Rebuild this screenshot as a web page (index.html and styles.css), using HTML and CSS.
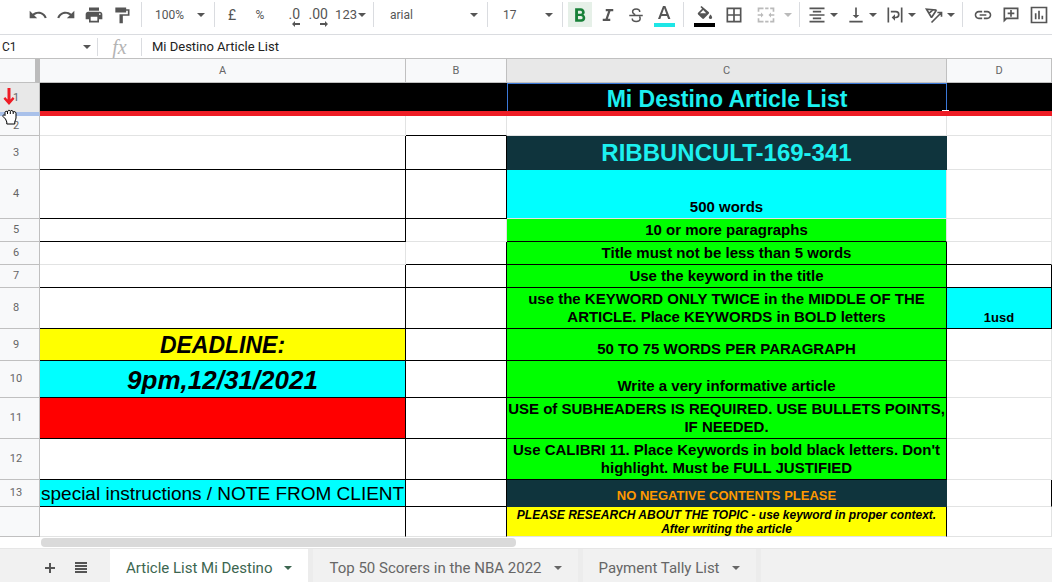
FILE: index.html
```html
<!DOCTYPE html>
<html lang="en">

<head>
    <meta charset="UTF-8">
    <meta name="viewport" content="width=device-width, initial-scale=1.0">
    <title>Mi Destino Article List</title>
    <link rel="stylesheet" href="styles.css">
</head>

<body>
    <!-- toolbar -->
    <div class="toolbar">
        <div class="group first">
            <button type="button" class="tool" aria-label="Undo"><svg width="20" height="20" viewBox="0 0 24 24"><path d="M12.500 8c-2.650 0-5.050.99-6.900 2.600L2 7v9h9l-3.620-3.620c1.390-1.160 3.160-1.880 5.120-1.880 3.540 0 6.550 2.310 7.600 5.500l2.370-.78C21.080 11.030 17.150 8 12.500 8z"/></svg></button>
            <button type="button" class="tool" aria-label="Redo"><svg width="20" height="20" viewBox="0 0 24 24"><path d="M18.400 10.600C16.550 8.990 14.150 8 11.500 8c-4.650 0-8.580 3.030-9.960 7.220L3.900 16c1.050-3.190 4.050-5.500 7.600-5.500 1.950 0 3.730.72 5.120 1.880L13 16h9V7l-3.600 3.600z"/></svg></button>
            <button type="button" class="tool" aria-label="Print"><svg width="20" height="20" viewBox="0 0 24 24"><path d="M19 8H5c-1.660 0-3 1.340-3 3v6h4v4h12v-4h4v-6c0-1.660-1.340-3-3-3zm-3 11H8v-5h8v5zm3-7c-.55 0-1-.45-1-1s.45-1 1-1 1 .45 1 1-.45 1-1 1zm-1-9H6v4h12V3z"/></svg></button>
            <button type="button" class="tool" aria-label="Paint format"><svg width="20" height="20" viewBox="0 0 24 24"><path d="M4 3h13v2h4v8h-8v9H9V11h10V7h-2v2H4z"/></svg></button>
        </div>
        <div class="group">
            <select class="pick zoom" aria-label="Zoom"><option>100%</option></select>
        </div>
        <div class="group">
            <button type="button" class="tool">£</button>
            <button type="button" class="tool small">%</button>
            <button type="button" class="tool decimal">.0<svg width="8" height="6" viewBox="0 0 8 6"><path d="M0 3l3-3v2h5v2H3v2z"/></svg></button>
            <button type="button" class="tool decimal">.00<svg width="8" height="6" viewBox="0 0 8 6"><path d="M8 3L5 0v2H0v2h5v2z"/></svg></button>
            <button type="button" class="tool more format">123<span class="caret"></span></button>
        </div>
        <div class="group">
            <select class="pick font" aria-label="Font"><option>arial</option></select>
        </div>
        <div class="group">
            <select class="pick size" aria-label="Font size"><option>17</option></select>
        </div>
        <div class="group">
            <button type="button" class="tool on" aria-label="Bold"><svg width="18" height="18" viewBox="0 0 24 24"><path d="M16.500 11.600c1.100-.8 1.800-2 1.800-3.300C18.300 5.300 16 3 13 3H5.500v18h8.400c2.900 0 5.100-2.300 5.100-5.100 0-1.900-1-3.500-2.500-4.300zM9.300 6.200h3.400a2 2 0 010 4.100H9.300zm4 11.500h-4v-4.400h4a2.200 2.200 0 010 4.400z"/></svg></button>
            <button type="button" class="tool" aria-label="Italic"><svg width="18" height="18" viewBox="0 0 24 24"><path d="M9 4v3h3.200l-3.500 10H5v3h10v-3h-3.200l3.500-10H19V4z"/></svg></button>
            <button type="button" class="tool" aria-label="Strikethrough"><svg width="18" height="18" viewBox="0 0 24 24" class="line"><path d="M3 12.500h18M17 8c0-2.500-2-4-4.800-4S7.500 5.500 7.500 7.800c0 2 1.500 3 3.500 3.700M7 16.500c0 2.500 2.200 4 5.200 4s5.300-1.500 5.300-4c0-1-.3-1.800-.9-2.500"/></svg></button>
            <button type="button" class="tool swatch" aria-label="Text color"><svg width="20" height="16" viewBox="0 0 20 16"><path d="M9 1h2.400l5 13h-2.300l-1.100-3.100H7.400L6.300 14H4zm-.9 7.900h4.200L10.200 3.200z"/></svg><span class="bar cyan"></span></button>
        </div>
        <div class="group wide">
            <button type="button" class="tool swatch" aria-label="Fill color"><svg width="20" height="16" viewBox="0 0 20 16"><path d="M7.500 1L6.400 2.100l1.700 1.700-4 4c-.5.500-.5 1.200 0 1.600l4.200 4.200c.5.500 1.200.5 1.700 0l4.700-4.800c.5-.5.500-1.200 0-1.700zM9.200 5l3 3.200H6z"/><path d="M16.500 9.500s-1.600 1.800-1.600 2.900a1.600 1.600 0 003.200 0c0-1.100-1.600-2.900-1.600-2.900z"/></svg><span class="bar black"></span></button>
            <button type="button" class="tool" aria-label="Borders"><svg width="20" height="20" viewBox="0 0 24 24"><path d="M3 3v18h18V3zm8 16H5v-6h6zm0-8H5V5h6zm8 8h-6v-6h6zm0-8h-6V5h6z"/></svg></button>
            <button type="button" class="tool more merge" aria-label="Merge cells" disabled><svg width="20" height="20" viewBox="0 0 24 24"><path d="M2 3h7v2H4v3H2zM11 3h4v2h-4zM17 3h5v5h-2V5h-3zM2 16h2v3h5v2H2zM11 19h4v2h-4zM20 16h2v5h-5v-2h3zM2 11h4V9l3 3-3 3v-2H2zM22 11h-4V9l-3 3 3 3v-2h4z"/></svg><span class="caret"></span></button>
        </div>
        <div class="group wide-gap">
            <button type="button" class="tool more" aria-label="Horizontal align"><svg width="20" height="20" viewBox="0 0 24 24"><path d="M3 3h18v2H3zM7 7h10v2H7zM3 11h18v2H3zM7 15h10v2H7zM3 19h18v2H3z"/></svg><span class="caret"></span></button>
            <button type="button" class="tool more" aria-label="Vertical align"><svg width="20" height="20" viewBox="0 0 24 24"><path d="M16 12h-3V3h-2v9H8l4 4zM4 19v2h16v-2z"/></svg><span class="caret"></span></button>
            <button type="button" class="tool more" aria-label="Text wrapping"><svg width="20" height="20" viewBox="0 0 24 24"><path d="M3 3h2v18H3zM19 3h2v18h-2zM7 7h6a4.500 4.500 0 010 9h-1v3l-4-4 4-4v3h1a2.500 2.500 0 000-5H7z"/></svg><span class="caret"></span></button>
            <button type="button" class="tool more" aria-label="Text rotation"><svg width="20" height="20" viewBox="0 0 24 24" class="line"><path d="M9 15L3 5l12 1M6 10l5-4.500M9 15l6-9M9 21L21 9M16 9h5v5"/></svg><span class="caret"></span></button>
        </div>
        <div class="group wide last">
            <button type="button" class="tool" aria-label="Insert link"><svg width="20" height="20" viewBox="0 0 24 24"><path d="M3.900 12c0-1.710 1.390-3.100 3.100-3.100h4V7H7c-2.760 0-5 2.240-5 5s2.240 5 5 5h4v-1.900H7c-1.710 0-3.100-1.390-3.100-3.100zM8 13h8v-2H8v2zm9-6h-4v1.900h4c1.710 0 3.100 1.390 3.100 3.100s-1.390 3.100-3.100 3.100h-4V17h4c2.760 0 5-2.240 5-5s-2.240-5-5-5z"/></svg></button>
            <button type="button" class="tool" aria-label="Insert comment"><svg width="20" height="20" viewBox="0 0 24 24"><path d="M3 3h18v14H7l-4 4V3zm2 2v11l1-1h13V5zm6 1h2v3h3v2h-3v3h-2v-3H8V9h3z"/></svg></button>
            <button type="button" class="tool" aria-label="Insert chart"><svg width="20" height="20" viewBox="0 0 24 24"><path d="M2 2v20h20V2zm18 18H4V4h16zM7 10h2v7H7zM11 7h2v10h-2zM15 13h2v4h-2z"/></svg></button>
        </div>
    </div>

    <!-- name box and formula -->
    <div class="formula-bar">
        <input class="name-box" type="text" value="C1" aria-label="Name box">
        <label class="fx" for="formula">fx</label>
        <input class="formula" id="formula" type="text" value="Mi Destino Article List">
    </div>

    <!-- the sheet -->
    <div class="sheet">
        <table class="grid">
            <colgroup>
                <col class="col-num">
                <col class="col-a">
                <col class="col-b">
                <col class="col-c">
                <col>
            </colgroup>
            <thead>
                <tr>
                    <th class="corner"></th>
                    <th>A</th>
                    <th>B</th>
                    <th class="current">C</th>
                    <th>D</th>
                </tr>
            </thead>
            <tbody>
                <tr class="frozen">
                    <th class="current">1
                        <svg class="arrow" width="12" height="18" viewBox="0 0 12 18"><path d="M4.500 0h3v11.500L9.800 9l1.700 1.700L6 17 .5 10.700 2.200 9l2.300 2.500z"/></svg>
                        <svg class="hand" width="16" height="16" viewBox="0 0 16 16"><path d="M3.500 10L1 7.500c-.5-1 .5-2 1.500-1.500l.5.500V3.500c0-1.500 2-1.500 2.500-.5C5.500 1 8 .8 8.300 2.300 9 1 11 1.300 11.200 3c1-.8 2.800-.2 2.800 1.300V9c0 1.500-.8 2.200-1.200 3.500V15h-8v-2zM5.500 3v2M8.300 2.500V5M11.200 3v2"/></svg>
                    </th>
                    <td></td>
                    <td></td>
                    <td class="selected title">Mi Destino Article List</td>
                    <td></td>
                </tr>
                <tr class="h20">
                    <th>2</th>
                    <td></td>
                    <td class="bb"></td>
                    <td></td>
                    <td></td>
                </tr>
                <tr class="h34">
                    <th>3</th>
                    <td class="br bb"></td>
                    <td class="br bb"></td>
                    <td class="navy title code">RIBBUNCULT-169-341</td>
                    <td></td>
                </tr>
                <tr class="h49">
                    <th>4</th>
                    <td class="br bb"></td>
                    <td class="br bb"></td>
                    <td class="cyan">500 words</td>
                    <td></td>
                </tr>
                <tr class="h23">
                    <th>5</th>
                    <td class="br bb"></td>
                    <td></td>
                    <td class="green bb">10 or more paragraphs</td>
                    <td></td>
                </tr>
                <tr class="h23">
                    <th>6</th>
                    <td></td>
                    <td class="br bb"></td>
                    <td class="green br bb">Title must not be less than 5 words</td>
                    <td class="bb"></td>
                </tr>
                <tr class="h23">
                    <th>7</th>
                    <td class="br bb"></td>
                    <td class="br bb"></td>
                    <td class="green br bb">Use the keyword in the title</td>
                    <td class="br bb"></td>
                </tr>
                <tr class="h41">
                    <th>8</th>
                    <td class="br bb"></td>
                    <td class="br bb"></td>
                    <td class="green br bb">use the KEYWORD ONLY TWICE in the MIDDLE OF THE ARTICLE. Place KEYWORDS in BOLD letters</td>
                    <td class="cyan br bb price">1usd</td>
                </tr>
                <tr class="h32">
                    <th>9</th>
                    <td class="yellow br bb deadline">DEADLINE:</td>
                    <td class="br bb"></td>
                    <td class="green br bb">50 TO 75 WORDS PER PARAGRAPH</td>
                    <td></td>
                </tr>
                <tr class="h37">
                    <th>10</th>
                    <td class="cyan br bb deadline date">9pm,12/31/2021</td>
                    <td class="br bb"></td>
                    <td class="green br bb">Write a very informative article</td>
                    <td></td>
                </tr>
                <tr class="h41">
                    <th>11</th>
                    <td class="red br bb"></td>
                    <td class="br bb"></td>
                    <td class="green br bb">USE of SUBHEADERS IS REQUIRED. USE BULLETS POINTS, IF NEEDED.</td>
                    <td></td>
                </tr>
                <tr class="h41">
                    <th>12</th>
                    <td class="br bb"></td>
                    <td class="br bb"></td>
                    <td class="green br bb">Use CALIBRI 11. Place Keywords in bold black letters. Don't highlight. Must be FULL JUSTIFIED</td>
                    <td></td>
                </tr>
                <tr class="h27">
                    <th>13</th>
                    <td class="cyan br bb special">special instructions / NOTE FROM CLIENT</td>
                    <td class="br bb"></td>
                    <td class="navy br bb warning">NO NEGATIVE CONTENTS PLEASE</td>
                    <td class="br"></td>
                </tr>
                <tr class="h30">
                    <th></th>
                    <td class="br"></td>
                    <td class="br"></td>
                    <td class="yellow br research">PLEASE RESEARCH ABOUT THE TOPIC - use keyword in proper context. After writing the article</td>
                    <td></td>
                </tr>
            </tbody>
        </table>
        <div class="scroll"><div class="thumb"></div></div>
    </div>

    <!-- sheet tabs -->
    <div class="tabs">
        <button type="button" class="tab-tool" aria-label="Add sheet"><svg width="12" height="12" viewBox="0 0 12 12"><path d="M5 1h2v4h4v2H7v4H5V7H1V5h4z"/></svg></button>
        <button type="button" class="tab-tool" aria-label="All sheets"><svg width="14" height="12" viewBox="0 0 14 12"><path d="M1 0h12v2H1zM1 3h12v2H1zM1 6h12v2H1zM1 9h12v2H1z"/></svg></button>
        <button type="button" class="tab active">Article List Mi Destino<span class="caret"></span></button>
        <button type="button" class="tab">Top 50 Scorers in the NBA 2022<span class="caret"></span></button>
        <button type="button" class="tab">Payment Tally List<span class="caret"></span></button>
    </div>
</body>

</html>
```
FILE: styles.css
```css
* {
    box-sizing: border-box;
}

body {
    margin: 0;
    min-height: 100vh;
    display: flex;
    flex-direction: column;
    overflow: hidden;
    background-color: white;
    font-family: Roboto, "Liberation Sans", sans-serif;
    color: #555;
}

button,
select,
input {
    margin: 0;
    padding: 0;
    border: 0;
    background-color: transparent;
    font-family: inherit;
    color: inherit;
}

svg {
    fill: #555;
    flex-shrink: 0;
}

.line {
    fill: none;
    stroke: #555;
    stroke-width: 2;
}

.caret {
    border: 4px solid transparent;
    border-top-color: currentColor;
    border-bottom: 0;
}

/* toolbar */
.toolbar {
    display: flex;
    height: 35px;
    padding: 2px 0 7px;
    border-bottom: 1px solid #dadce0;
}

.group {
    display: flex;
    align-items: center;
    gap: 4px;
    flex-shrink: 0;
    padding: 0 7px 0 5px;
    border-right: 1px solid #dadce0;
}

.group.first {
    padding-left: 26px;
}

.group.wide {
    padding-left: 8px;
    gap: 6px;
}

.group.wide-gap {
    gap: 6px;
}

.group.last {
    gap: 4px;
    border-right: 0;
}

.tool {
    display: flex;
    align-items: center;
    justify-content: center;
    width: 24px;
    height: 25px;
    font-size: 14px;
}

.tool.small {
    font-size: 12px;
}

.tool.on {
    background-color: #e6f0e8;
}

.tool.on svg {
    fill: #188038;
}

.tool.more {
    width: 33px;
    gap: 3px;
    justify-content: flex-end;
}

.tool.format {
    width: 34px;
    gap: 1px;
    font-size: 13px;
}

.tool.merge {
    width: 40px;
    gap: 8px;
    opacity: 0.4;
}

.decimal {
    flex-direction: column;
    align-items: flex-end;
    line-height: 14px;
    padding-top: 5px;
}

.swatch {
    flex-direction: column;
    justify-content: flex-end;
    gap: 2px;
}

.bar {
    width: 21px;
    height: 4px;
}

.bar.cyan {
    background-color: #1ee6e6;
}

.bar.black {
    background-color: black;
}

.pick {
    appearance: none;
    height: 25px;
    font-size: 12px;
    background-image: url("data:image/svg+xml,%3Csvg xmlns='http://www.w3.org/2000/svg' width='8' height='4'%3E%3Cpath d='M0 0h8L4 4z' fill='%23555'/%3E%3C/svg%3E");
    background-repeat: no-repeat;
    background-position: right 2px center;
}

.zoom {
    width: 60px;
    padding-left: 8px;
}

.font {
    width: 101px;
    padding-left: 11px;
}

.size {
    width: 62px;
    padding-left: 10px;
}

/* formula bar */
.formula-bar {
    display: flex;
    align-items: center;
    height: 23px;
    font-size: 13px;
    color: #222;
}

.name-box {
    width: 98px;
    height: 18px;
    padding-left: 2px;
    font-size: 12px;
    border-right: 1px solid #dadce0;
    background-image: url("data:image/svg+xml,%3Csvg xmlns='http://www.w3.org/2000/svg' width='8' height='4'%3E%3Cpath d='M0 0h8L4 4z' fill='%23555'/%3E%3C/svg%3E");
    background-repeat: no-repeat;
    background-position: right 6px center;
}

.fx {
    width: 44px;
    text-align: center;
    font-family: "Liberation Serif", serif;
    font-size: 20px;
    line-height: 18px;
    font-style: italic;
    color: #b4b4b4;
    border-right: 1px solid #dadce0;
}

.formula {
    flex: 1;
    padding-left: 10px;
    font-size: 13px;
}

/* sheet */
.sheet {
    flex: 1;
}

.grid {
    width: 100%;
    table-layout: fixed;
    border-collapse: separate;
    border-spacing: 0;
    border-top: 1px solid #c0c0c0;
}

.col-num {
    width: 40px;
}

.col-a {
    width: 366px;
}

.col-b {
    width: 101px;
}

.col-c {
    width: 440px;
}

th {
    padding: 0;
    font-size: 11px;
    line-height: 12px;
    font-weight: normal;
    color: #666;
    background-color: #f8f9fa;
    border-right: 1px solid #c0c0c0;
    border-bottom: 1px solid #c0c0c0;
}

thead th {
    height: 24px;
}

tbody th {
    padding-right: 7px;
}

th.current {
    background-color: #e8e8e8;
}

.corner {
    border-right: 5px solid #bcbcbc;
}

td {
    padding: 0 1px 2px;
    vertical-align: bottom;
    text-align: center;
    font-family: "Liberation Sans", Arial, sans-serif;
    font-size: 15px;
    line-height: 18px;
    font-weight: bold;
    color: black;
    border-right: 1px solid #e2e3e3;
    border-bottom: 1px solid #e2e3e3;
}

.br {
    border-right-color: black;
}

.bb {
    border-bottom-color: black;
}

.navy {
    background-color: #0f343d;
    border-color: #0f343d;
}

td.cyan {
    background-color: cyan;
}

.green {
    background-color: lime;
}

.yellow {
    background-color: yellow;
}

.red {
    background-color: red;
}

td.title {
    font-size: 23px;
    line-height: 24px;
    color: #1cf0f0;
}

td.code {
    font-size: 24px;
    line-height: 28px;
}

/* frozen first row, with the red marker under it */
.frozen th {
    position: relative;
    height: 33px;
    border-bottom: 4px solid #a9c1ea;
}

.frozen td {
    height: 33px;
    padding-bottom: 0;
    background-color: black;
    border-right: 0;
    border-bottom: 5px solid #ee1c25;
}

.frozen .selected {
    position: relative;
    box-shadow: inset 1px 1px #3b78d8, inset -1px 0 #3b78d8;
}

/* fill handle */
.selected::after {
    content: "";
    position: absolute;
    right: -2px;
    bottom: 0;
    width: 7px;
    height: 1px;
    background-color: white;
}

.arrow {
    position: absolute;
    left: 3px;
    top: 5px;
    fill: #ee1c25;
}

.hand {
    position: absolute;
    left: 2px;
    top: 26px;
    fill: white;
    stroke: black;
}

.h20 { height: 20px; }
.h23 { height: 23px; }
.h27 { height: 27px; }
.h30 { height: 30px; }
.h32 { height: 32px; }
.h34 { height: 34px; }
.h37 { height: 37px; }
.h41 { height: 41px; }
.h49 { height: 49px; }

td.price {
    font-size: 13px;
    line-height: 16px;
}

td.deadline {
    font-size: 23px;
    line-height: 26px;
    font-style: italic;
}

td.date {
    font-size: 26px;
    line-height: 30px;
}

td.special {
    font-size: 19px;
    line-height: 20px;
    font-weight: normal;
    white-space: nowrap;
}

td.warning {
    font-size: 13px;
    line-height: 16px;
    color: #ff9900;
}

td.research {
    padding-bottom: 0;
    font-size: 12px;
    line-height: 14px;
    font-style: italic;
}

.scroll {
    height: 11px;
    padding: 1px 0 0 41px;
    background-color: white;
}

.thumb {
    width: 47%;
    height: 9px;
    border-radius: 4px;
    background-color: #dadada;
}

/* tabs */
.tabs {
    display: flex;
    height: 34px;
    padding-left: 34px;
    background-color: #f1f1f1;
    border-top: 1px solid #e6e6e6;
}

.tab-tool {
    display: flex;
    align-items: center;
    justify-content: center;
    width: 31px;
    padding-top: 4px;
}

.tab {
    display: flex;
    align-items: center;
    gap: 12px;
    padding: 5px 16px 0;
    font-size: 15px;
    color: #666;
    border-right: 5px solid #ececec;
}

.tab.active {
    margin-left: 14px;
    background-color: white;
    color: #3c6650;
}
```
